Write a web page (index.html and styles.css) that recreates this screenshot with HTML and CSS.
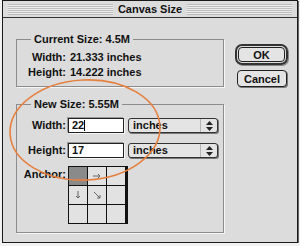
FILE: index.html
```html
<!DOCTYPE html>
<html lang="en">
<head>
  <meta charset="UTF-8" />
  <title>Canvas Size</title>
  <link rel="stylesheet" href="styles.css">
</head>
<body>
  <div class="dialog">
    <div class="titlebar">
      <div class="stripes"><span class="title">Canvas Size</span></div>
    </div>

    <div class="content">
      <div class="groups">
        <fieldset class="group current">
          <legend>Current Size: 4.5M</legend>
          <div class="rows">
            <span class="lbl">Width:</span><span class="val">21.333 inches</span>
            <span class="lbl">Height:</span><span class="val">14.222 inches</span>
          </div>
        </fieldset>

        <fieldset class="group new">
          <legend>New Size: 5.55M</legend>
          <div class="rows">
            <span class="lbl">Width:</span>
            <div class="field-row">
              <span class="field">22<i class="caret"></i></span>
              <span class="popup">inches
                <span class="arrows">
                  <svg width="7" height="10" viewBox="0 0 7 10"><path d="M3.5 0 L7 4 L0 4 Z M0 6 L7 6 L3.5 10 Z" fill="#222"/></svg>
                </span>
              </span>
            </div>

            <span class="lbl">Height:</span>
            <div class="field-row">
              <span class="field">17</span>
              <span class="popup">inches
                <span class="arrows">
                  <svg width="7" height="10" viewBox="0 0 7 10"><path d="M3.5 0 L7 4 L0 4 Z M0 6 L7 6 L3.5 10 Z" fill="#222"/></svg>
                </span>
              </span>
            </div>

            <span class="lbl anchor-lbl">Anchor:</span>
            <div class="anchor">
              <span class="cell on"></span>
              <span class="cell">
                <svg width="10" height="10" viewBox="0 0 10 10"><path d="M1 5 H8 M6 3 L8 5 L6 7" stroke="#666" stroke-width="1" fill="none"/></svg>
              </span>
              <span class="cell"></span>
              <span class="cell">
                <svg width="10" height="10" viewBox="0 0 10 10"><path d="M5 1 V8 M3 6 L5 8 L7 6" stroke="#666" stroke-width="1" fill="none"/></svg>
              </span>
              <span class="cell">
                <svg width="10" height="10" viewBox="0 0 10 10"><path d="M2 2 L8 8 M5 8 H8 V5" stroke="#666" stroke-width="1" fill="none"/></svg>
              </span>
              <span class="cell"></span>
              <span class="cell"></span>
              <span class="cell"></span>
              <span class="cell"></span>
            </div>
          </div>
        </fieldset>
      </div>

      <div class="buttons">
        <div class="ok-ring"><button class="btn">OK</button></div>
        <button class="btn cancel">Cancel</button>
      </div>
    </div>

    <!-- hand drawn highlight over the new size fields -->
    <svg class="markup" width="300" height="246" viewBox="0 0 300 246">
      <ellipse cx="85" cy="130" rx="75" ry="50" transform="rotate(-3 85 130)" fill="none" stroke="#e6803f" stroke-width="1.6"/>
    </svg>
  </div>
</body>
</html>
```

FILE: styles.css
```css
body {
  margin: 0;
  background: #f2f2f2;
  font-family: "Liberation Sans", Arial, sans-serif;
  font-size: 11px;
  font-weight: bold;
  color: #111;
}
.dialog {
  position: relative;
  margin-left: 2px;
  width: 296px;
  height: 243px;
  box-sizing: border-box;
  border: 1px solid #1a1a1a;
  background: #dcdcdc;
  box-shadow: 1px 1px 0 #666;
}
.titlebar {
  height: 16px;
  border-bottom: 1px solid #333;
  display: flex;
  align-items: center;
  padding: 0 5px;
}
.stripes {
  flex: 1;
  height: 11px;
  display: flex;
  justify-content: center;
  background: repeating-linear-gradient(#bdbdbd 0 1px, #ececec 1px 2px);
}
.title {
  background: #dcdcdc;
  padding: 0 5px;
  line-height: 11px;
}
.content {
  display: flex;
  padding: 14px 0 0 13px;
}
.groups {
  width: 208px;
}
.group {
  margin: 0;
  padding: 4px 0 6px;
  border: 1px solid #8c8c8c;
  box-shadow: 1px 1px 0 #f6f6f6;
  min-width: 0;
}
.group legend {
  margin-left: 14px;
  padding: 0 3px;
  line-height: 14px;
}
.group.new {
  margin-top: 10px;
  padding: 7px 0 8px;
}
.rows {
  display: grid;
  grid-template-columns: 49px auto;
  column-gap: 2px;
  align-items: center;
  line-height: 15px;
}
.new .rows {
  row-gap: 10px;
}
.lbl {
  text-align: right;
}
.val {
  padding-left: 2px;
}
.field-row {
  display: flex;
  gap: 4px;
}
.field {
  width: 56px;
  height: 15px;
  box-sizing: border-box;
  border: 1px solid #222;
  background: #fff;
  box-shadow: -1px -1px 0 #9a9a9a, 1px 1px 0 #f6f6f6;
  padding-left: 3px;
  line-height: 13px;
  display: flex;
  align-items: center;
}
.caret {
  display: inline-block;
  width: 1px;
  height: 11px;
  background: #000;
}
.popup {
  width: 90px;
  height: 15px;
  box-sizing: border-box;
  border: 1px solid #333;
  border-radius: 3px;
  box-shadow: 1px 1px 0 #777;
  background: #e4e4e4;
  display: flex;
  align-items: center;
  padding-left: 4px;
  line-height: 13px;
}
.arrows {
  margin-left: auto;
  width: 16px;
  height: 100%;
  border-left: 1px solid #b5b5b5;
  display: flex;
  align-items: center;
  justify-content: center;
}
.anchor-lbl {
  align-self: start;
  margin-top: -1px;
}
.anchor {
  margin-top: -2px;
  width: 58px;
  display: grid;
  grid-template-columns: repeat(3, 18px);
  grid-auto-rows: 18px;
  gap: 1px;
  padding: 1px;
  background: #111;
}
.cell {
  background: #e2e2e2;
  display: flex;
  align-items: center;
  justify-content: center;
}
.cell.on {
  background: #8a8a8a;
}
.buttons {
  margin: 12px 0 0 11px;
  display: flex;
  flex-direction: column;
}
.btn {
  font: inherit;
  color: #111;
  background: #e4e4e4;
  border: 1px solid #222;
  border-radius: 4px;
  padding: 0;
}
.ok-ring {
  width: 53px;
  height: 21px;
  box-sizing: border-box;
  border: 2px solid #333;
  border-radius: 7px;
  padding: 1px;
  box-shadow: 1px 1px 0 #888;
}
.ok-ring .btn {
  width: 100%;
  height: 100%;
  display: block;
}
.cancel {
  margin: 5px 0 0 2px;
  width: 50px;
  height: 17px;
  box-shadow: 1px 1px 0 #777;
}
.markup {
  position: absolute;
  left: -3px;
  top: -1px;
  pointer-events: none;
}
```
